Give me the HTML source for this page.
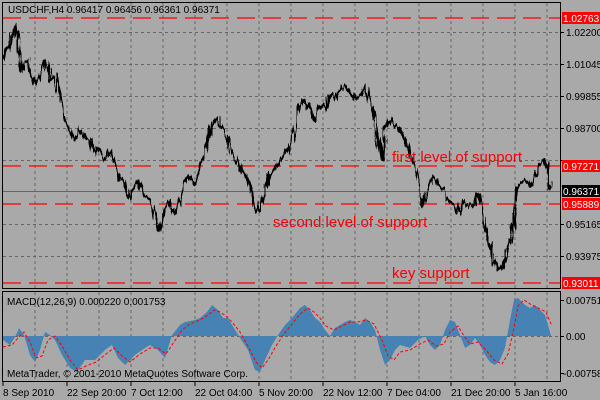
<!DOCTYPE html>
<html><head><style>
body{margin:0;width:600px;height:400px;background:#a9a9a9;overflow:hidden;font-family:"Liberation Sans",sans-serif}
svg{position:absolute;left:0;top:0}
</style></head><body>
<svg width="600" height="400" xmlns="http://www.w3.org/2000/svg" font-family="Liberation Sans, sans-serif">
<defs>
<filter id="j" x="-5%" y="-10%" width="110%" height="120%">
<feTurbulence type="fractalNoise" baseFrequency="0.35 0.05" numOctaves="2" seed="3"/>
<feDisplacementMap in="SourceGraphic" scale="9" xChannelSelector="R" yChannelSelector="G"/>
</filter>
</defs>
<rect width="600" height="400" fill="#a9a9a9"/>
<g stroke="#666" stroke-dasharray="3,3" stroke-width="1">
<path d="M35 3V288M67 3V288M99 3V288M131 3V288M163 3V288M195 3V288M227 3V288M259 3V288M291 3V288M323 3V288M355 3V288M387 3V288M419 3V288M451 3V288M483 3V288M515 3V288M547 3V288"/>
<path d="M3 32.5H560M3 64.5H560M3 96.5H560M3 128.5H560M3 160.5H560M3 224.5H560M3 256.5H560"/>
<path d="M35 292V380M67 292V380M99 292V380M131 292V380M163 292V380M195 292V380M227 292V380M259 292V380M291 292V380M323 292V380M355 292V380M387 292V380M419 292V380M451 292V380M483 292V380M515 292V380M547 292V380"/>
<path d="M3 336.5H560"/>
</g>
<path d="M3 191.5H560" stroke="#666" stroke-width="1"/>
<g stroke="#f00" stroke-width="1.3" stroke-dasharray="18,8" fill="none">
<path d="M3 18H560M3 166H560M3 204H560M3 283H560"/>
</g>
<g fill="none" stroke="#000" stroke-linejoin="round" filter="url(#j)">
<polyline stroke-width="2.5" points="3,60 7,50 10,45 13,35 15,25 18,40 20,55 22,70 25,62 28,60 31,72 35,85 38,80 40,75 43,68 45,60 48,72 50,80 53,78 55,75 58,90 60,95 63,110 65,120 68,125 70,130 73,138 75,140 78,133 80,130 85,138 90,140 93,150 95,155 98,148 100,150 103,158 105,160 108,152 110,150 113,160 115,165 118,175 120,180 123,178 125,185 128,195 130,200 133,192 135,190 138,180 140,185 143,192 145,195 148,198 150,200 153,210 155,215 158,225 160,230 163,220 165,210 168,205 170,200 173,210 175,215 178,205 180,200 183,190 185,180 188,178 190,175 193,182 195,185 198,172 200,165 203,158 205,150 208,140 210,130 213,122 215,120 218,118 220,125 223,128 225,130 228,140 230,145 233,155 235,160 238,162 240,165 243,172 245,175 248,180 250,185 253,198 255,205 258,212 260,210 263,198 265,190 268,180 270,175 273,172 275,170 278,165 280,160 283,158 285,155 288,150 290,145 293,135 295,130 298,112 300,105 303,100 305,100 308,108 310,110 313,118 315,120 318,110 320,105 323,108 325,110 328,100 330,95 333,98 335,100 338,92 340,90 343,88 345,85 348,88 350,90 353,96 355,100 358,96 360,95 363,88 365,85 368,95 370,100 373,112 375,120 378,140 380,150 383,160 385,130 388,122 390,120 393,124 395,125 398,128 400,130 403,136 405,140 408,145 410,150 413,162 415,170 418,180 420,190 423,205 426,195 428,190 431,180 433,175 436,180 438,185 441,188 443,190 446,196 448,200 451,204 453,205 456,210 458,215 461,205 463,200 466,206 468,210 471,206 473,205 476,198 478,195 481,205 483,215 486,230 488,240 491,252 493,260 496,266 498,270 501,268 503,265 506,256 508,250 511,238 513,230 515,210 516,200 518,190 520,185 523,182 525,180 528,184 530,185 533,180 535,175 538,168 540,165 543,160 545,160 547,168 548,175 550,185 551,190"/>
</g>
<polygon fill="#4682b4" points="3,336 3,340 10,345 16,335 19,328 24,335 30,355 35,362 40,350 45,332 50,335 55,340 62,355 70,368 77,372 85,360 95,360 105,350 112,345 118,358 125,365 135,355 145,348 150,345 158,350 165,358 172,335 180,325 185,322 195,320 200,318 207,312 212,305 218,310 223,318 228,318 232,325 240,338 248,350 255,370 260,372 265,360 272,345 278,335 285,325 292,318 300,308 305,305 310,310 315,318 320,322 325,330 330,336 335,328 340,325 345,322 350,320 355,322 360,325 365,318 370,322 375,330 380,350 385,365 390,360 395,350 400,345 410,348 418,340 425,336 430,345 435,350 440,345 445,330 450,320 455,322 460,335 465,348 470,345 475,338 480,345 485,355 490,362 495,365 500,360 505,348 510,320 514,300 518,298 525,305 530,308 535,305 540,310 545,315 548,325 551,336"/>
<polyline fill="none" stroke="#f00" stroke-width="1" stroke-dasharray="3,2" points="3,347 12,345 18,338 24,332 30,342 36,358 42,356 48,340 55,336 62,346 70,360 78,370 86,366 96,362 106,354 114,348 122,356 130,362 140,354 150,348 158,348 166,354 174,342 182,330 190,324 200,320 208,315 214,310 220,312 226,316 232,322 240,332 248,346 256,362 262,368 268,360 276,346 284,334 292,324 300,314 308,308 314,312 320,318 326,326 334,330 342,326 350,322 358,322 366,320 374,324 382,340 388,356 394,360 400,352 410,350 420,344 428,340 436,346 444,344 450,332 458,326 464,336 470,344 478,342 486,350 494,360 502,364 508,354 514,328 518,306 524,300 530,304 538,308 546,312 552,326"/>
<g fill="none" stroke="#000" stroke-width="1">
<rect x="2.5" y="2.5" width="558" height="286"/>
<rect x="2.5" y="291.5" width="558" height="90"/>
<path d="M3 382V386M67 382V386M131 382V386M195 382V386M259 382V386M323 382V386M387 382V386M451 382V386M515 382V386"/>
<path d="M561 32.5h3M561 64.5h3M561 96.5h3M561 128.5h3M561 160.5h3M561 224.5h3M561 256.5h3M561 300.5h3M561 336.5h3M561 373.5h3"/>
</g>
<g font-size="10" fill="#000">
<text x="8" y="13">USDCHF,H4  0.96417 0.96456 0.96361 0.96371</text>
<text x="566" y="36">1.02200</text>
<text x="566" y="68">1.01045</text>
<text x="566" y="100">0.99855</text>
<text x="566" y="132">0.98700</text>
<text x="566" y="228">0.95165</text>
<text x="566" y="260">0.93975</text>
<text x="566" y="304">0.00751</text>
<text x="566" y="340">0.00</text>
<text x="563" y="377">-0.00758</text>
<text x="7" y="305">MACD(12,26,9) 0.000220 0.001753</text>
<text x="7" y="377">MetaTrader, © 2001-2010 MetaQuotes Software Corp.</text>
<text x="3" y="396">8 Sep 2010</text>
<text x="67" y="396">22 Sep 20:00</text>
<text x="131" y="396">7 Oct 12:00</text>
<text x="195" y="396">22 Oct 04:00</text>
<text x="259" y="396">5 Nov 20:00</text>
<text x="323" y="396">22 Nov 12:00</text>
<text x="387" y="396">7 Dec 04:00</text>
<text x="451" y="396">21 Dec 20:00</text>
<text x="515" y="396">5 Jan 16:00</text>
</g>
<rect x="562" y="12" width="38" height="12" fill="#f00"/>
<rect x="562" y="160" width="38" height="12" fill="#f00"/>
<rect x="562" y="185" width="38" height="12" fill="#000"/>
<rect x="562" y="198" width="38" height="12" fill="#f00"/>
<rect x="562" y="277" width="38" height="12" fill="#f00"/>
<g font-size="10" fill="#fff">
<text x="563" y="22">1.02763</text>
<text x="563" y="170">0.97271</text>
<text x="563" y="195">0.96371</text>
<text x="563" y="208">0.95889</text>
<text x="563" y="287">0.93011</text>
</g>
<g font-size="15" fill="#f00">
<text x="392" y="162">first level of support</text>
<text x="273" y="227">second level of support</text>
<text x="392" y="278">key support</text>
</g>
</svg>
</body></html>
